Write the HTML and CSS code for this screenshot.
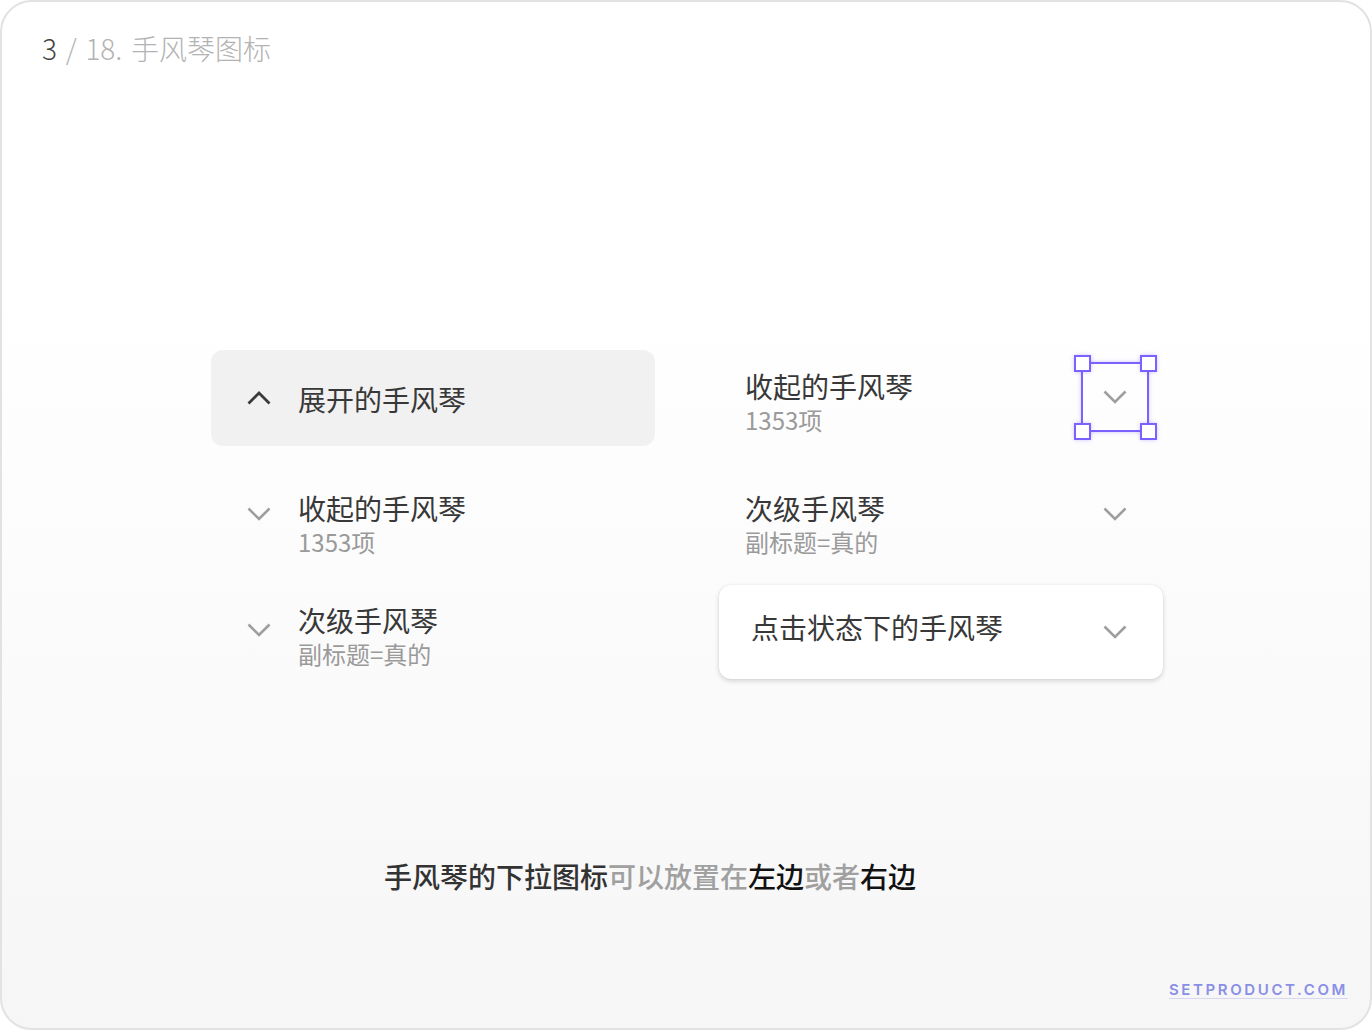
FILE: index.html
```html
<!DOCTYPE html>
<html lang="zh">
<head>
<meta charset="utf-8">
<title>手风琴图标</title>
<link rel="stylesheet" href="styles.css">
</head>
<body>
<div class="frame">
  <header class="header"><span class="page-num">3</span><span class="page-rest"> / 18. 手风琴图标</span></header>

  <section class="grid">
    <div class="item expanded">
      <span class="chev up">
        <svg width="24" height="14" viewBox="0 0 24 14"><path d="M1.5 12.5 L12 2 L22.5 12.5" fill="none" stroke="#3a3a3a" stroke-width="2.8"/></svg>
      </span>
      <span class="title">展开的手风琴</span>
    </div>

    <div class="item right r1">
      <div class="texts">
        <div class="title">收起的手风琴</div>
        <div class="sub">1353项</div>
      </div>
      <span class="chev sel">
        <svg width="24" height="14" viewBox="0 0 24 14"><path d="M1.5 1.5 L12 12 L22.5 1.5" fill="none" stroke="#9e9e9e" stroke-width="2.6"/></svg>
        <span class="selection">
          <span class="handle tl"></span><span class="handle tr"></span>
          <span class="handle bl"></span><span class="handle br"></span>
        </span>
      </span>
    </div>

    <div class="item left r2">
      <span class="chev">
        <svg width="24" height="14" viewBox="0 0 24 14"><path d="M1.5 1.5 L12 12 L22.5 1.5" fill="none" stroke="#9e9e9e" stroke-width="2.6"/></svg>
      </span>
      <div class="texts">
        <div class="title">收起的手风琴</div>
        <div class="sub">1353项</div>
      </div>
    </div>

    <div class="item right r2">
      <div class="texts">
        <div class="title">次级手风琴</div>
        <div class="sub">副标题=真的</div>
      </div>
      <span class="chev">
        <svg width="24" height="14" viewBox="0 0 24 14"><path d="M1.5 1.5 L12 12 L22.5 1.5" fill="none" stroke="#9e9e9e" stroke-width="2.6"/></svg>
      </span>
    </div>

    <div class="item left r3">
      <span class="chev">
        <svg width="24" height="14" viewBox="0 0 24 14"><path d="M1.5 1.5 L12 12 L22.5 1.5" fill="none" stroke="#9e9e9e" stroke-width="2.6"/></svg>
      </span>
      <div class="texts">
        <div class="title">次级手风琴</div>
        <div class="sub">副标题=真的</div>
      </div>
    </div>

    <div class="item pressed">
      <span class="title">点击状态下的手风琴</span>
      <span class="chev">
        <svg width="24" height="14" viewBox="0 0 24 14"><path d="M1.5 1.5 L12 12 L22.5 1.5" fill="none" stroke="#9e9e9e" stroke-width="2.6"/></svg>
      </span>
    </div>
  </section>

  <p class="caption"><span class="dark">手风琴的下拉图标</span><span class="muted">可以放置在</span><span class="black">左边</span><span class="muted">或者</span><span class="black">右边</span></p>

  <footer class="footer"><span class="brand">SETPRODUCT.COM</span></footer>
</div>
</body>
</html>
```

FILE: styles.css
```css
* { box-sizing: border-box; }
html, body { margin: 0; padding: 0; background: #ffffff; }
body {
  font-family: "Noto Sans CJK SC", "Noto Sans", sans-serif;
  width: 1372px;
  height: 1030px;
  overflow: hidden;
}
.frame {
  width: 1372px;
  height: 1030px;
  border: 2px solid #e2e2e2;
  border-radius: 32px;
  background: linear-gradient(to bottom, #ffffff 0%, #ffffff 28%, #f6f6f6 100%);
  display: flex;
  flex-direction: column;
}
.header {
  padding: 28px 0 0 40px;
  font-size: 28px;
  line-height: 36px;
  font-weight: 300;
  word-spacing: 2.5px;
  height: 64px;
}
.page-num { color: #444444; }
.page-rest { color: #b3b3b3; }

.grid {
  margin: 284px auto 0;
  display: grid;
  grid-template-columns: 444px 444px;
  grid-auto-rows: 96px;
  column-gap: 64px;
  row-gap: 21px;
  transform: translateX(1px);
}
.item {
  display: flex;
  align-items: flex-start;
  position: relative;
}
.title {
  font-size: 28px;
  line-height: 36px;
  color: #383838;
  white-space: nowrap;
}
.sub {
  font-size: 24px;
  line-height: 32px;
  color: #9a9a9a;
  white-space: nowrap;
}
.chev {
  width: 24px;
  height: 14px;
  display: flex;
  align-self: center;
  position: relative;
}
.chev svg { display: block; }

.expanded {
  background: #f1f1f1;
  border-radius: 12px;
  align-items: center;
  padding-left: 36px;
}
.expanded .chev { margin-right: 27px; margin-top: 0; }
.expanded .title { margin-top: 2px; }

.left { padding-left: 36px; }
.left .chev { margin-right: 27px; margin-top: 0; }
.left.r2 .texts { margin-top: 23px; }
.left.r2 .chev { margin-top: -2px; }
.left.r3 .texts { margin-top: 18px; }
.left.r3 .chev { margin-top: -4px; }

.right { padding-left: 26px; padding-right: 36px; }
.right .texts { flex: 1; }
.right.r1 .texts { margin-top: 18px; }
.right.r1 .chev { margin-top: -2px; }
.right.r2 .texts { margin-top: 23px; }
.right.r2 .chev { margin-top: -2px; }

.selection {
  position: absolute;
  left: -22px;
  top: -28px;
  width: 68px;
  height: 70px;
  border: 2.5px solid #7b61ff;
  box-shadow: 0 0 4px rgba(123, 97, 255, 0.35);
}
.handle {
  position: absolute;
  width: 17px;
  height: 17px;
  background: #ffffff;
  border: 2.5px solid #7b61ff;
  box-shadow: 0 0 4px rgba(123, 97, 255, 0.35);
}
.handle.tl { left: -9.5px; top: -9.5px; }
.handle.tr { right: -9.5px; top: -9.5px; }
.handle.bl { left: -9.5px; bottom: -9.5px; }
.handle.br { right: -9.5px; bottom: -9.5px; }

.pressed {
  background: #ffffff;
  border-radius: 12px;
  box-shadow: 0 2px 5px rgba(0, 0, 0, 0.16), 0 0 1px rgba(0, 0, 0, 0.12);
  align-items: center;
  padding-left: 32px;
  padding-right: 36px;
  justify-content: space-between;
  margin-top: 1px;
  height: 94px;
}
.pressed .title { margin-top: -10px; }
.pressed .chev { margin-top: 0; }

.caption {
  margin: 176px 0 0;
  padding-right: 72px;
  text-align: center;
  font-size: 28px;
  line-height: 40px;
  font-weight: 500;
}
.caption .dark { color: #333333; }
.caption .muted { color: #a0a0a0; }
.caption .black { color: #111111; }

.footer {
  margin-top: auto;
  padding: 0 22px 28px 0;
  text-align: right;
  line-height: 20px;
}
.brand {
  font-family: "Inter", "Noto Sans", sans-serif;
  font-size: 15px;
  font-weight: 600;
  letter-spacing: 2.6px;
  color: #8a8fe6;
  text-decoration: underline;
  text-decoration-color: rgba(138, 143, 230, 0.3);
  text-underline-offset: 3px;
}
```
